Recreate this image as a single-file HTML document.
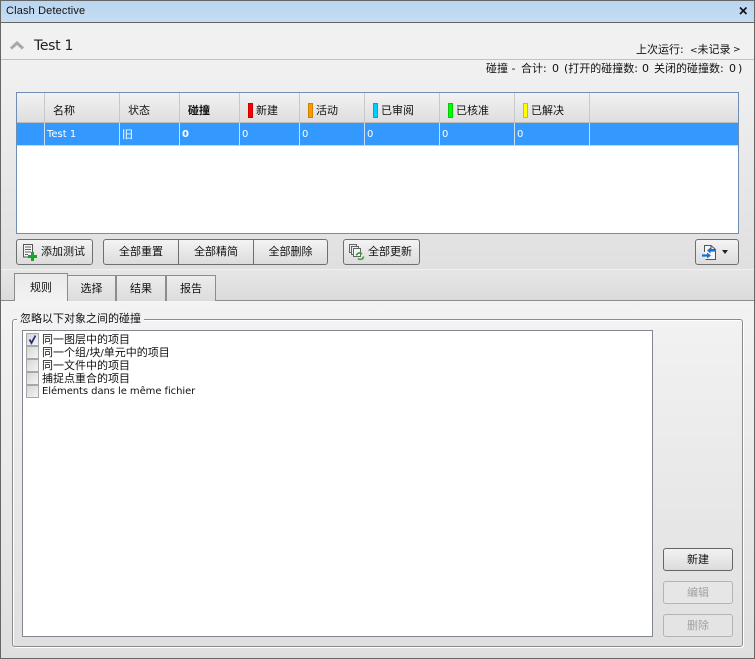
<!DOCTYPE html>
<html><head><meta charset="utf-8">
<style>
*{box-sizing:border-box;margin:0;padding:0}
html,body{width:755px;height:659px;overflow:hidden;background:#e2e2e2}
body{position:relative;font-family:"DejaVu Sans","Noto Sans CJK SC",sans-serif;font-size:11px;color:#111}
.a{position:absolute;white-space:nowrap}
.t{position:absolute;white-space:nowrap;font-size:11px;line-height:14px;color:#111}
.th{position:absolute;top:93px;height:29px;border-right:1px solid #c8c8c8;line-height:36px;font-family:"Liberation Sans","Noto Sans CJK SC",sans-serif;font-size:11px;color:#111;background:linear-gradient(#f2f2f2,#dedede)}
.td{position:absolute;top:123px;height:22px;border-right:1px solid #cfdff0;line-height:23px;color:#fff;background:#3399ff;font-family:"DejaVu Sans","Noto Sans CJK SC",sans-serif;font-size:10px}
.bar{position:absolute;top:10px;width:5px;height:15px;border:1px solid}
.btn{position:absolute;height:26px;border:1px solid #6f6f6f;border-radius:3px;background:linear-gradient(#f4f4f4,#dcdcdc);text-align:center;line-height:25px;font-family:"Liberation Sans","Noto Sans CJK SC",sans-serif;font-size:11px;color:#111}
.tab{position:absolute;border:1px solid #8c8c8c;border-bottom:none;background:linear-gradient(#ececec,#dcdcdc);text-align:center;font-family:"Liberation Sans","Noto Sans CJK SC",sans-serif;font-size:11px;color:#111}
.cb{position:absolute;left:26px;width:13px;height:13px;border:1px solid #a6a7a7;background:linear-gradient(135deg,#d6d6d6,#f4f4f4)}
.lbl{position:absolute;left:42px;height:13px;line-height:13px;font-family:"DejaVu Sans","Noto Sans CJK SC",sans-serif;font-size:11px;color:#111;white-space:nowrap}
.rb{position:absolute;left:663px;width:70px;height:23px;border-radius:3px;text-align:center;line-height:22px;font-family:"Liberation Sans","Noto Sans CJK SC",sans-serif;font-size:11px}
</style></head>
<body>
<!-- background -->
<div class="a" style="left:0;top:0;width:755px;height:659px;background:linear-gradient(#f1f1f1 0,#f1f1f1 60px,#e0e0e0 269px)"></div>
<!-- title bar -->
<div class="a" style="left:0;top:0;width:755px;height:23px;background:linear-gradient(#b9d5f0,#c6ddf3);border-top:1px solid #666;border-bottom:1px solid #666"></div>
<div class="a" style="left:6px;top:4px;font-family:'Liberation Sans',sans-serif;font-size:11px;line-height:15px;color:#111;letter-spacing:.15px">Clash Detective</div>
<svg class="a" style="left:738px;top:5px" width="11" height="11" viewBox="0 0 11 11"><path d="M2 2.500L8.500 9M8.500 2.500L2 9" stroke="#111" stroke-width="1.600"/></svg>
<!-- header -->
<svg class="a" style="left:10px;top:41px" width="14" height="9" viewBox="0 0 14 9"><path d="M1 7.500L7 2L13 7.500" fill="none" stroke="#a8a8a8" stroke-width="3"/></svg>
<div class="a" style="left:34px;top:37px;font-family:'DejaVu Sans',sans-serif;font-size:14px;line-height:18px;color:#222;letter-spacing:-.3px">Test 1</div>
<div class="a" style="left:0;top:59px;width:755px;height:1px;background:#c2c2c2"></div>
<div class="t" style="left:636px;top:43px">上次运行:</div>
<div class="t" style="left:690px;top:43px"><span style="font-size:9px">&lt;</span>未记录</div>
<div class="t" style="left:733px;top:43px;font-size:9px">&gt;</div>
<div class="t" style="left:486px;top:62px">碰撞 -</div>
<div class="t" style="left:521px;top:62px">合计:</div>
<div class="t" style="left:552px;top:62px">0</div>
<div class="t" style="left:564px;top:62px">(打开的碰撞数:</div>
<div class="t" style="left:642px;top:62px">0</div>
<div class="t" style="left:654px;top:62px">关闭的碰撞数:</div>
<div class="t" style="left:729px;top:62px">0</div>
<div class="t" style="left:738px;top:62px">)</div>
<!-- table -->
<div class="a" style="left:16px;top:92px;width:723px;height:142px;background:#fff;border:1px solid #6e8fb3"></div>
<div class="a" style="left:17px;top:93px;width:721px;height:29px;background:linear-gradient(#f2f2f2,#dedede)"></div>
<div class="a" style="left:17px;top:122px;width:721px;height:1px;background:#bdbdbd"></div>
<div class="th" style="left:17px;width:28px"></div>
<div class="th" style="left:45px;width:75px;padding-left:8px">名称</div>
<div class="th" style="left:120px;width:60px;padding-left:8px">状态</div>
<div class="th" style="left:180px;width:60px;padding-left:8px;font-weight:bold">碰撞</div>
<div class="th" style="left:240px;width:60px;padding-left:16px"><span class="bar" style="left:8px;background:#f00;border-color:#c00"></span>新建</div>
<div class="th" style="left:300px;width:65px;padding-left:16px"><span class="bar" style="left:8px;background:#f90;border-color:#d08000"></span>活动</div>
<div class="th" style="left:365px;width:75px;padding-left:16px"><span class="bar" style="left:8px;background:#0cf;border-color:#0ac"></span>已审阅</div>
<div class="th" style="left:440px;width:75px;padding-left:16px"><span class="bar" style="left:8px;background:#0f0;border-color:#0c0"></span>已核准</div>
<div class="th" style="left:515px;width:75px;padding-left:16px"><span class="bar" style="left:8px;background:#ff0;border-color:#c8c800"></span>已解决</div>
<div class="td" style="left:17px;width:28px"></div>
<div class="td" style="left:45px;width:75px;padding-left:2px">Test 1</div>
<div class="td" style="left:120px;width:60px;padding-left:2px;font-size:11px">旧</div>
<div class="td" style="left:180px;width:60px;padding-left:2px;font-weight:bold">0</div>
<div class="td" style="left:240px;width:60px;padding-left:2px">0</div>
<div class="td" style="left:300px;width:65px;padding-left:2px">0</div>
<div class="td" style="left:365px;width:75px;padding-left:2px">0</div>
<div class="td" style="left:440px;width:75px;padding-left:2px">0</div>
<div class="td" style="left:515px;width:75px;padding-left:2px">0</div>
<div class="td" style="left:590px;width:148px;border-right:none"></div>
<div class="a" style="left:17px;top:145px;width:721px;height:1px;background:#d4d4d4"></div>
<!-- buttons -->
<div class="btn" style="left:16px;top:239px;width:77px;padding-left:17px">添加测试</div>
<svg class="a" style="left:22px;top:243px" width="16" height="18" viewBox="0 0 16 18"><path d="M1.500 1.500H10.500V14H1.500Z" fill="#f4f4f4" stroke="#555"/><path d="M3 4H9M3 6.500H9M3 9H9M3 11.500H6" stroke="#666"/><path d="M9 9H12V12H15V15H12V18H9V15H6V12H9Z" fill="#17a52c"/></svg>
<div class="btn" style="left:103px;top:239px;width:76px;border-radius:3px 0 0 3px">全部重置</div>
<div class="btn" style="left:178px;top:239px;width:76px;border-radius:0">全部精简</div>
<div class="btn" style="left:253px;top:239px;width:75px;border-radius:0 3px 3px 0">全部删除</div>
<div class="btn" style="left:343px;top:239px;width:77px;padding-left:17px">全部更新</div>
<svg class="a" style="left:349px;top:244px" width="16" height="16" viewBox="0 0 16 16"><path d="M.5.5H7.500V8.500H.5Z" fill="#eee" stroke="#666"/><path d="M2.500 2.500H9.500V10.500H2.500Z" fill="#eee" stroke="#666"/><path d="M4.500 4.500H11.500V12.500H4.500Z" fill="#f6f6f6" stroke="#666"/><path d="M7.500 11.500A3.200 3.200 0 0 1 13 10" fill="none" stroke="#2aa52a" stroke-width="1.600"/><path d="M14.500 12.500A3.200 3.200 0 0 1 9 14.500" fill="none" stroke="#2aa52a" stroke-width="1.600"/></svg>
<div class="btn" style="left:695px;top:239px;width:44px"></div>
<svg class="a" style="left:701px;top:244px" width="18" height="17" viewBox="0 0 18 17"><path d="M3.500 8V1.500H10L14.500 5.500V15.500H4.500" fill="#f6f6f6" stroke="#555"/><path d="M10 1.500V5.500H14.500" fill="none" stroke="#555"/><path d="M15 6.500H9M1 11.500H7" fill="none" stroke="#1a6fd4" stroke-width="2.200"/><path d="M9.500 3.500L6 6.500L9.500 9.500ZM6 8.500L10 11.500L6 14.500Z" fill="#1a6fd4"/></svg>
<div class="a" style="left:722px;top:250px;width:0;height:0;border-left:3.500px solid transparent;border-right:3.500px solid transparent;border-top:4px solid #222"></div>
<!-- tab band -->
<div class="a" style="left:0;top:269px;width:755px;height:1px;background:#f0f0f0"></div>
<div class="a" style="left:0;top:270px;width:755px;height:30px;background:linear-gradient(#e6e6e6,#dbdbdb)"></div>
<div class="a" style="left:0;top:300px;width:755px;height:359px;background:linear-gradient(#f3f3f3,#dfdfdf)"></div>
<div class="a" style="left:0;top:300px;width:755px;height:1px;background:#8c8c8c"></div>
<div class="tab" style="left:67px;top:275px;width:49px;height:26px;line-height:26px">选择</div>
<div class="tab" style="left:116px;top:275px;width:50px;height:26px;line-height:26px">结果</div>
<div class="tab" style="left:166px;top:275px;width:50px;height:26px;line-height:26px">报告</div>
<div class="tab" style="left:14px;top:273px;width:54px;height:28px;line-height:28px;background:linear-gradient(#e9e9e9,#f3f3f3)">规则</div>
<!-- group -->
<div class="a" style="left:12px;top:319px;width:731px;height:328px;border:1px solid #8c8c8c;border-radius:3px;box-shadow:inset 1px 1px 0 #fff,1px 1px 0 #fff"></div>
<div class="a" style="left:17px;top:312px;height:14px;padding:0 3px;line-height:14px;font-size:11px;background:#f2f2f2;color:#111">忽略以下对象之间的碰撞</div>
<!-- list -->
<div class="a" style="left:22px;top:330px;width:631px;height:307px;background:#fff;border:1px solid #828790"></div>
<div class="cb" style="top:333px"></div>
<svg class="a" style="left:27px;top:334px" width="11" height="11" viewBox="0 0 11 11"><path d="M2.500 5.500L4.500 9L8.500 1.500" fill="none" stroke="#2a2f7a" stroke-width="1.800"/></svg>
<div class="lbl" style="top:333px">同一图层中的项目</div>
<div class="cb" style="top:346px"></div><div class="lbl" style="top:346px"><span>同一个组</span><span style="font-size:10px">/</span>块<span style="font-size:10px">/</span>单元中的项目</div>
<div class="cb" style="top:359px"></div><div class="lbl" style="top:359px">同一文件中的项目</div>
<div class="cb" style="top:372px"></div><div class="lbl" style="top:372px">捕捉点重合的项目</div>
<div class="cb" style="top:385px"></div><div class="lbl" style="top:385px;font-size:10px;letter-spacing:-.07px">Eléments dans le même fichier</div>
<!-- right buttons -->
<div class="rb" style="top:548px;border:1px solid #666;background:linear-gradient(#f2f2f2,#dcdcdc);color:#111">新建</div>
<div class="rb" style="top:581px;border:1px solid #b4b4b4;background:#e6e6e6;color:#a2a2a2">编辑</div>
<div class="rb" style="top:614px;border:1px solid #b4b4b4;background:#e4e4e4;color:#a2a2a2">删除</div>
<!-- window edges -->
<div class="a" style="left:0;top:0;width:1px;height:659px;background:#666"></div>
<div class="a" style="left:754px;top:0;width:1px;height:659px;background:#666"></div>
<div class="a" style="left:0;top:658px;width:755px;height:1px;background:#666"></div>
</body></html>
